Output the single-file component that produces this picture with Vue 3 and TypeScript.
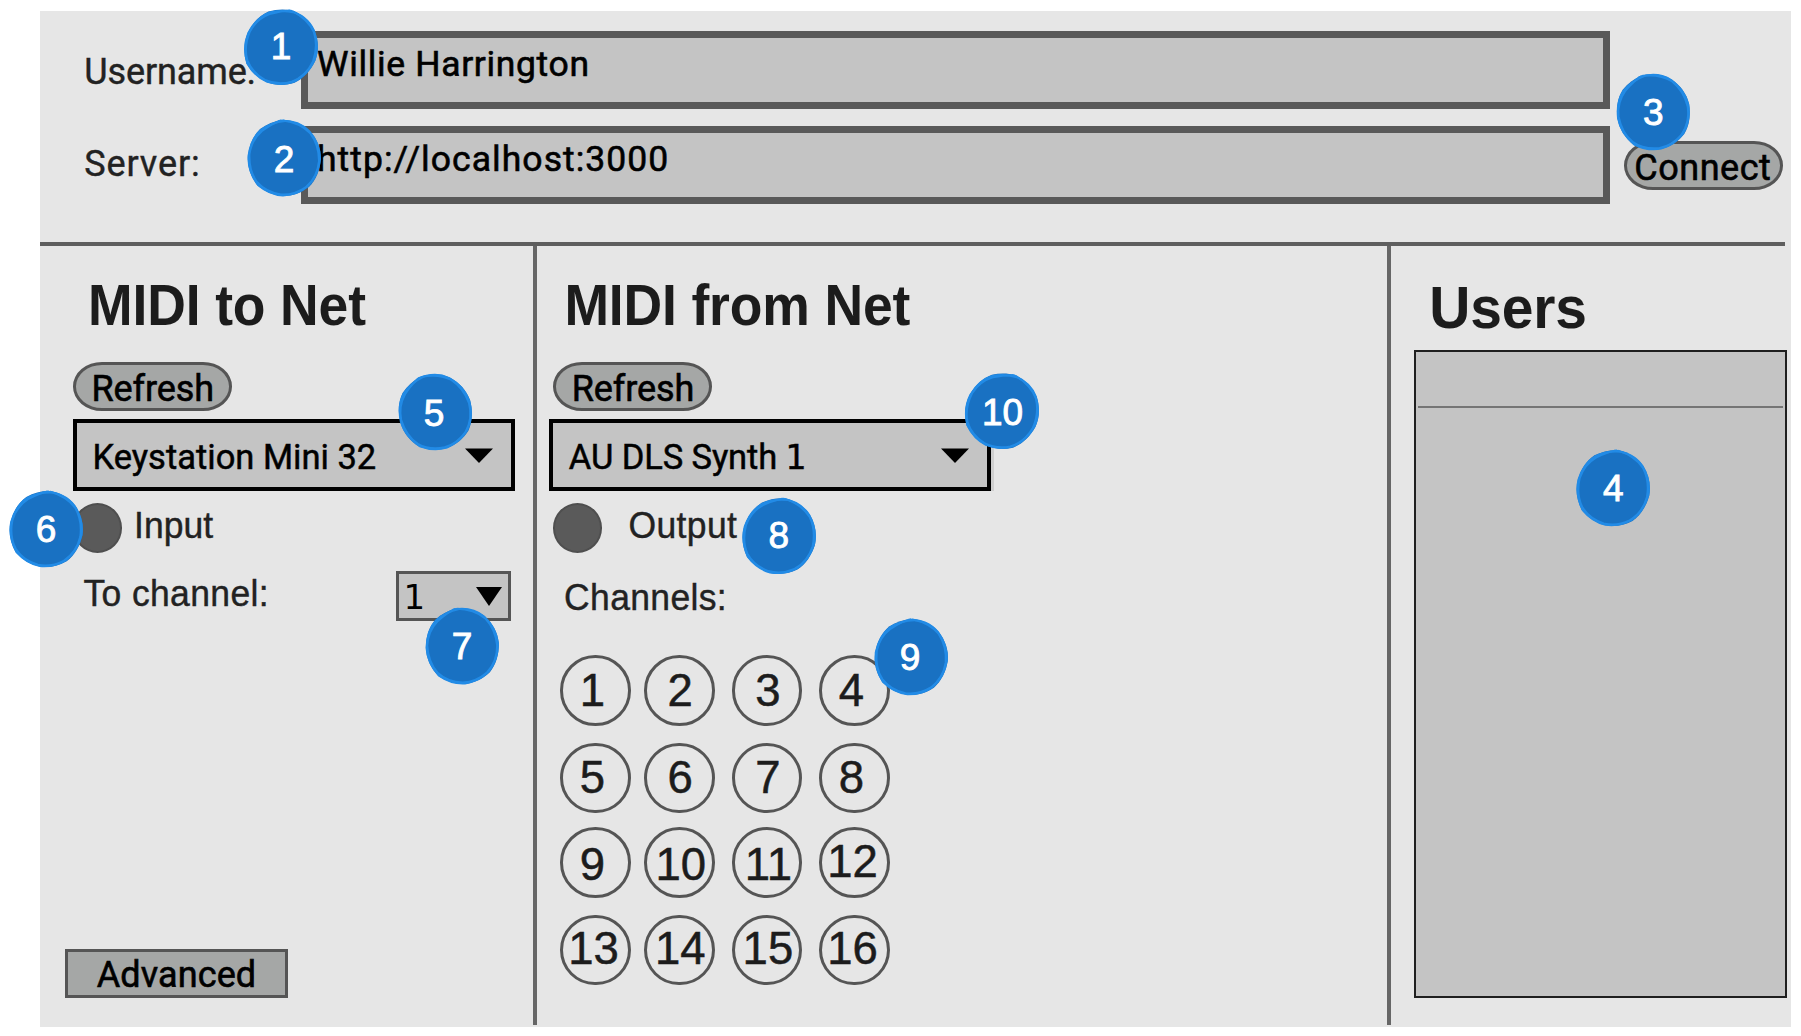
<script setup lang="ts">
import { ref } from 'vue'

interface Badge {
  label: string
  x: number
  y: number
  dx: number
  dy: number
  turn: number
}

const username = ref('Willie Harrington')
const server = ref('http://localhost:3000')
const channels = Array.from({ length: 16 }, (_, i) => i + 1)

/* x / y is the centre of the marker, dx / dy the centre of its digit relative to it */
const badges: Badge[] = [
  { label: '1', x: 281, y: 47, dx: 0, dy: 0.4, turn: 20 },
  { label: '2', x: 283.7, y: 158, dx: 0.3, dy: 1.5, turn: 0 },
  { label: '3', x: 1653.3, y: 111.7, dx: 0, dy: 1, turn: -14 },
  { label: '4', x: 1613.2, y: 488.3, dx: 0, dy: 0.9, turn: 10 },
  { label: '5', x: 435, y: 411.8, dx: -1, dy: 1.7, turn: -20 },
  { label: '6', x: 46, y: 528.5, dx: 0, dy: 1.3, turn: 8 },
  { label: '7', x: 462, y: 645.5, dx: 0, dy: 1, turn: -6 },
  { label: '8', x: 778.8, y: 535.8, dx: 0, dy: -0.3, turn: 12 },
  { label: '9', x: 910.7, y: 656.8, dx: -0.7, dy: 0.9, turn: 4 },
  { label: '10', x: 1002.3, y: 411.3, dx: 0.3, dy: 1.6, turn: 24 },
]
</script>

<template>
  <main class="stage">
    <div class="panel">
      <header class="connection">
        <div class="row">
          <label class="label username">Username:</label>
          <div class="field"><span class="name">{{ username }}</span></div>
        </div>
        <div class="row second">
          <label class="label server">Server:</label>
          <div class="field second-field"><span class="url">{{ server }}</span></div>
          <button class="pill connect">Connect</button>
        </div>
      </header>
      <div class="divider"></div>

      <div class="columns">
        <section class="col to-net">
          <h2>MIDI to Net</h2>
          <button class="pill">Refresh</button>
          <div class="select">
            <span class="device keystation">Keystation Mini 32</span>
            <svg class="caret" viewBox="0 0 28 15"><path d="M0 0.5H28L14 15Z" /></svg>
          </div>
          <div class="status"><i class="dot"></i><span class="input">Input</span></div>
          <div class="to-channel">
            <span class="text">To channel:</span>
            <div class="mini">
              <span>1</span>
              <svg viewBox="0 0 26 19"><path d="M0 0H26L13 19Z" /></svg>
            </div>
          </div>
          <button class="advanced">Advanced</button>
        </section>

        <section class="col from-net">
          <h2>MIDI from Net</h2>
          <button class="pill">Refresh</button>
          <div class="select shadowed">
            <span class="device synth">AU DLS Synth <span class="footed">1</span></span>
            <svg class="caret" viewBox="0 0 28 15"><path d="M0 0.5H28L14 15Z" /></svg>
          </div>
          <div class="status"><i class="dot"></i><span class="output">Output</span></div>
          <div class="channels-label">Channels:</div>
          <div class="grid">
            <div v-for="n in channels" :key="n" class="channel"><span>{{ n }}</span></div>
          </div>
        </section>

        <section class="col users">
          <h2>Users</h2>
          <div class="list"><div class="list-head"></div></div>
        </section>
      </div>
    </div>

    <div
      v-for="b in badges"
      :key="b.label"
      class="badge"
      :style="{ left: b.x - 40 + 'px', top: b.y - 40 + 'px' }"
    >
      <svg viewBox="-40 -40 80 80">
        <g :transform="`rotate(${b.turn})`">
          <path
            class="fill"
            d="M-2 -38C9 -38 19 -34 26 -27C33 -19 37 -10 37 1C36 12 32 22 25 29C17 35 9 38 -1 38C-12 37 -20 33 -27 27C-33 19 -37 9 -36 -2C-35 -13 -31 -22 -24 -29C-17 -34 -10 -37 -2 -38Z"
          />
          <path
            class="stroke"
            d="M-5 -37C7 -38 18 -34 25 -27C32 -19 36 -10 36 1C35 12 31 21 24 28C17 34 9 37 -1 37.5C-11 37 -19 33 -26 27C-32 19 -36 9 -35.5 -2C-34 -13 -30 -22 -23 -28C-15 -34 -9 -36 1 -37"
          />
          <path
            class="stroke"
            d="M-1 -37.5C11 -36 19 -32 26 -25C32 -17 35 -8 35 3C34 14 29 23 22 29C15 34 7 37 -3 36.5C-13 35 -21 31 -27 24C-33 16 -35 7 -34.5 -4C-33 -14 -29 -21 -22 -27C-15 -32 -9 -36 -3 -37.5"
          />
        </g>
      </svg>
      <span :style="{ transform: `translate(${b.dx}px, ${b.dy}px)` }">{{ b.label }}</span>
    </div>
  </main>
</template>

<style>
body {
  margin: 0;
  background: #fff;
}
</style>

<style scoped>
.stage {
  position: relative;
  width: 1801px;
  height: 1036px;
  overflow: hidden;
  background: #fff;
  box-sizing: border-box;
  padding: 11px 10px 9px 40px;
  font-family: Roboto, 'Liberation Sans', sans-serif;
  white-space: nowrap;
}
.stage * {
  box-sizing: border-box;
}
.panel {
  height: 1016px;
  background: #e6e6e6;
}

/* connection form */
.connection {
  height: 230.8px;
  padding-top: 19.6px;
}
.row {
  display: flex;
  align-items: flex-start;
  height: 78.7px;
}
.row.second {
  margin-top: 16.4px;
}
.label {
  flex: none;
  width: 261px;
  padding: 21.4px 0 0 44.2px;
  font-size: 36px;
  line-height: 40px;
  color: #222;
  -webkit-text-stroke: 0.4px #222;
}
.username {
  letter-spacing: -0.1px;
}
.server {
  padding-top: 18.4px;
  letter-spacing: 0.9px;
}
.field {
  width: 1309px;
  height: 78.7px;
  border: 7.5px solid #595959;
  background: #c4c4c4;
  padding: 6.4px 0 0 9px;
  font-size: 35.5px;
  line-height: 40px;
  color: #000;
  -webkit-text-stroke: 0.6px #000;
}
.second-field {
  padding-top: 6.8px;
}
.name {
  letter-spacing: 0.65px;
}
.url {
  letter-spacing: 1.05px;
}
.pill {
  display: flex;
  align-items: center;
  justify-content: center;
  width: 159.3px;
  height: 48.6px;
  margin: 0;
  padding: 4px 0 0 1px;
  border: 3px solid #555;
  border-radius: 29px / 24.3px;
  background: #a5a7a6;
  font-family: inherit;
  font-size: 36px;
  line-height: 40px;
  letter-spacing: -0.1px;
  color: #000;
  -webkit-text-stroke: 0.6px #000;
}
.connect {
  margin: 15.6px 0 0 13.7px;
  padding: 4px 1px 0 0;
  letter-spacing: 0.5px;
}
.divider {
  width: 1745px;
  height: 4px;
  background: #5e5e5e;
}

/* three columns */
.columns {
  display: flex;
  height: 779.3px;
}
.col {
  display: flex;
  flex-direction: column;
  align-items: flex-start;
}
.to-net {
  width: 497.2px;
  padding-left: 32.5px;
  border-right: 4px solid #666;
}
.from-net {
  width: 853.4px;
  padding-left: 11.6px;
  border-right: 4px solid #666;
}
.users {
  padding-left: 23.4px;
}
h2 {
  height: 60px;
  margin: 31px 0 25.5px 15.6px;
  font-family: 'Liberation Sans', Arial, sans-serif;
  font-size: 53.5px;
  font-weight: 700;
  line-height: 60px;
  letter-spacing: -0.15px;
  color: #1c1c1c;
  transform: scaleY(1.075);
  transform-origin: 0 48.5px;
}
.from-net .pill {
  margin-left: 4px;
}
.select {
  display: flex;
  align-items: center;
  justify-content: space-between;
  width: 442px;
  height: 72.4px;
  margin-top: 8px;
  padding: 0 17.6px 0 16px;
  border: 4px solid #000;
  background: #c4c4c4;
}
.shadowed {
  box-shadow: 3px 0 0 #cfcfcf;
}
.device {
  font-size: 34.5px;
  line-height: 40px;
  color: #000;
  -webkit-text-stroke: 0.5px #000;
  padding-top: 4px;
}
.keystation {
  letter-spacing: 0;
}
.synth {
  letter-spacing: -0.1px;
}
.footed {
  font-family: 'DejaVu Sans', sans-serif;
  font-size: 33px;
  line-height: 1;
}
.caret {
  width: 28px;
  height: 15px;
  margin-top: 0;
}
.status {
  display: flex;
  height: 50px;
  margin-top: 11.3px;
  font-family: 'Liberation Sans', Arial, sans-serif;
  font-size: 35.5px;
  line-height: 40px;
  color: #222;
  -webkit-text-stroke: 0.4px #222;
}
.dot {
  width: 49.6px;
  height: 50px;
  border: 2px solid #4f4f4f;
  border-radius: 50%;
  background: #5a5a5a;
}
.from-net .dot {
  margin-left: 3.8px;
}
.input,
.output {
  padding-top: 3px;
  transform: scaleY(1.04);
  transform-origin: 0 35px;
}
.input {
  margin-left: 12px;
}
.output {
  margin-left: 26.4px;
  letter-spacing: 0.35px;
}
.to-channel {
  display: flex;
  align-items: flex-start;
  height: 50px;
  margin-top: 18.6px;
}
.text,
.channels-label {
  font-family: 'Liberation Sans', Arial, sans-serif;
  font-size: 35.5px;
  line-height: 40px;
  color: #222;
  -webkit-text-stroke: 0.4px #222;
  transform: scaleY(1.04);
  transform-origin: 0 32px;
}
.text {
  width: 312.5px;
  margin: 3.3px 0 0 11px;
  letter-spacing: 0.35px;
}
.mini {
  display: flex;
  align-items: center;
  justify-content: space-between;
  width: 115px;
  height: 50px;
  padding: 0 6px 0 4.6px;
  border: 3.5px solid #555;
  background: #c4c4c4;
  font-family: 'DejaVu Sans', sans-serif;
  font-size: 34px;
  line-height: 40px;
}
.mini span {
  padding-top: 2px;
}
.mini svg {
  width: 26px;
  height: 19px;
}
.advanced {
  width: 223px;
  height: 49.5px;
  margin: 327.4px 0 0 -8px;
  padding: 4px 0 0 1px;
  border: 3.5px solid #555;
  border-radius: 0;
  background: #a5a7a6;
  font-family: inherit;
  font-size: 36px;
  line-height: 38px;
  letter-spacing: 0.1px;
  color: #000;
  -webkit-text-stroke: 0.6px #000;
}
.channels-label {
  margin: 25.4px 0 37px 15.3px;
  letter-spacing: 0.35px;
}
.grid {
  display: grid;
  grid-template-columns: 83.7px 87.7px 87.6px 70.7px;
  grid-template-rows: 87.7px 84.3px 87.7px 70.7px;
  margin-left: 11.4px;
}
.channel {
  display: flex;
  align-items: center;
  justify-content: center;
  width: 70.7px;
  height: 70.7px;
  border: 3.4px solid #555;
  border-radius: 50%;
  font-family: 'Liberation Sans', Arial, sans-serif;
  font-size: 45.5px;
  line-height: 50px;
  color: #1c1c1c;
  -webkit-text-stroke: 0.5px #1c1c1c;
}
.channel span {
  padding: 0.4px 0 0;
}
.channel:nth-child(4n + 1) span,
.channel:nth-child(4n) span {
  padding-right: 6px;
}
.channel:nth-child(4n + 2) span,
.channel:nth-child(4n + 3) span {
  padding-left: 2px;
}
.channel:nth-child(n + 9):nth-child(-n + 11) span {
  padding-bottom: 0;
  padding-top: 5px;
}
.channel:nth-child(n + 10):nth-child(-n + 11) span {
  padding-left: 3px;
}
.channel:nth-child(n + 12) span {
  padding-top: 0;
  padding-bottom: 1.4px;
  padding-right: 4px;
}
.channel:nth-child(n + 14):nth-child(-n + 15) span {
  padding-right: 0;
}

/* user list */
.users h2 {
  margin: 32.4px 0 12.1px 15.2px;
  font-size: 57px;
  transform: scaleY(1.05);
  transform-origin: 0 49.7px;
}
.list {
  width: 373px;
  height: 648px;
  padding: 0 2px;
  border: 2px solid #1f1f1f;
  background: #c4c4c4;
}
.list-head {
  height: 55.6px;
  border-bottom: 2px solid #757575;
}

/* numbered markers */
.badge {
  position: absolute;
  display: flex;
  align-items: center;
  justify-content: center;
  width: 80px;
  height: 80px;
}
.badge svg {
  position: absolute;
  inset: 0;
  width: 80px;
  height: 80px;
}
.badge span {
  position: relative;
  font-family: 'Liberation Sans', Arial, sans-serif;
  font-size: 37px;
  line-height: 40px;
  color: #fff;
  -webkit-text-stroke: 0.9px #fff;
}
.fill {
  fill: #1971c2;
}
.stroke {
  fill: none;
  stroke: #228be6;
  stroke-width: 2;
  stroke-linecap: round;
}
</style>
